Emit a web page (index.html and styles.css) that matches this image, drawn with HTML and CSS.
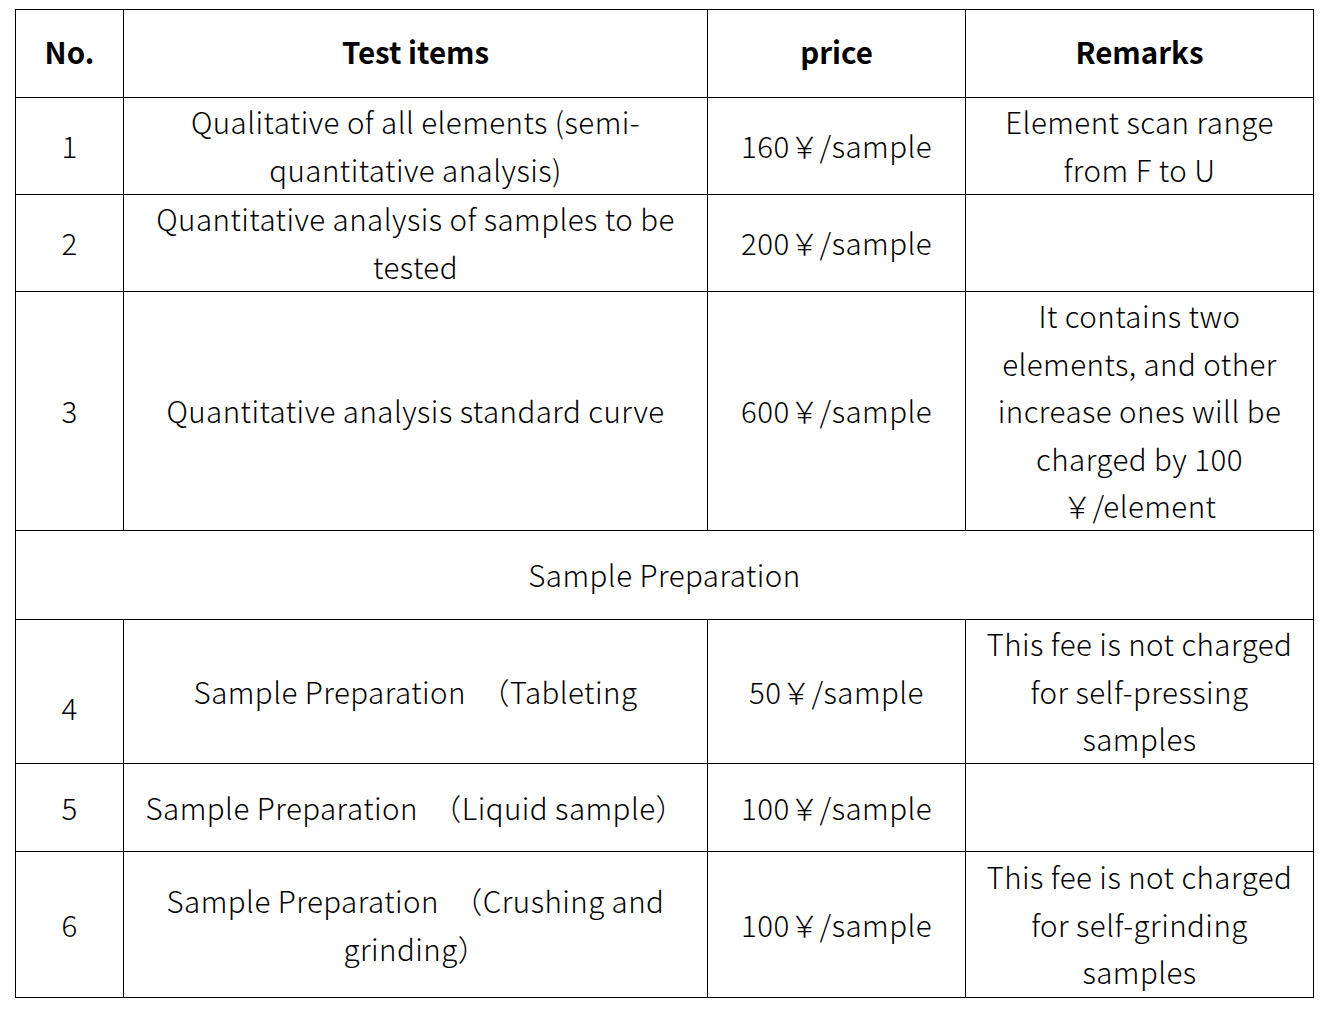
FILE: index.html
```html
<!DOCTYPE html>
<html lang="en">
<head>
<meta charset="utf-8">
<title>Price list</title>
<link rel="stylesheet" href="styles.css">
</head>
<body>
<div class="page">
<table class="price-table">
  <colgroup>
    <col class="c-no">
    <col class="c-item">
    <col class="c-price">
    <col class="c-remark">
  </colgroup>
  <thead>
    <tr class="h-88">
      <th>No.</th>
      <th>Test items</th>
      <th>price</th>
      <th>Remarks</th>
    </tr>
  </thead>
  <tbody>
    <tr class="h-97">
      <td>1</td>
      <td>Qualitative of all elements (semi-<br>quantitative analysis)</td>
      <td>160￥/sample</td>
      <td>Element scan range<br>from F to U</td>
    </tr>
    <tr class="h-97">
      <td>2</td>
      <td>Quantitative analysis of samples to be<br>tested</td>
      <td>200￥/sample</td>
      <td></td>
    </tr>
    <tr class="h-239">
      <td>3</td>
      <td>Quantitative analysis standard curve</td>
      <td>600￥/sample</td>
      <td>It contains two<br>elements, and other<br>increase ones will be<br>charged by 100<br>￥/element</td>
    </tr>
    <tr class="h-89">
      <td colspan="4">Sample Preparation</td>
    </tr>
    <tr class="h-144">
      <td class="low">4</td>
      <td>Sample Preparation &nbsp;（Tableting</td>
      <td>50￥/sample</td>
      <td>This fee is not charged<br>for self-pressing<br>samples</td>
    </tr>
    <tr class="h-88">
      <td>5</td>
      <td>Sample Preparation &nbsp;（Liquid sample）</td>
      <td>100￥/sample</td>
      <td></td>
    </tr>
    <tr class="h-146">
      <td>6</td>
      <td>Sample Preparation &nbsp;（Crushing and<br>grinding）</td>
      <td>100￥/sample</td>
      <td>This fee is not charged<br>for self-grinding<br>samples</td>
    </tr>
  </tbody>
</table>
</div>
</body>
</html>
```
FILE: styles.css
```css
html, body {
  margin: 0;
  padding: 0;
  background: #ffffff;
}
.page {
  padding: 9px 0 0 15px;
}
.price-table {
  border-collapse: collapse;
  table-layout: fixed;
  width: 1298px;
  font-family: "Noto Sans CJK SC", "Noto Sans", sans-serif;
  font-size: 29.5px;
  font-weight: 300;
  line-height: 47.6px;
  color: #000;
}
.c-no { width: 108px; }
.c-item { width: 584px; }
.c-price { width: 258px; }
.c-remark { width: 348px; }
.price-table th,
.price-table td {
  border: 1px solid #000;
  padding: 0;
  text-align: center;
  vertical-align: middle;
  white-space: nowrap;
}
.price-table td {
  letter-spacing: 0.45px;
}
.price-table th {
  font-weight: 700;
  padding-bottom: 3px;
}
.h-88 { height: 88px; }
.h-89 { height: 89px; }
.h-97 { height: 97px; }
.h-144 { height: 144px; }
.h-146 { height: 146px; }
.h-239 { height: 239px; }
.price-table td.low {
  padding-top: 32px;
}
```
